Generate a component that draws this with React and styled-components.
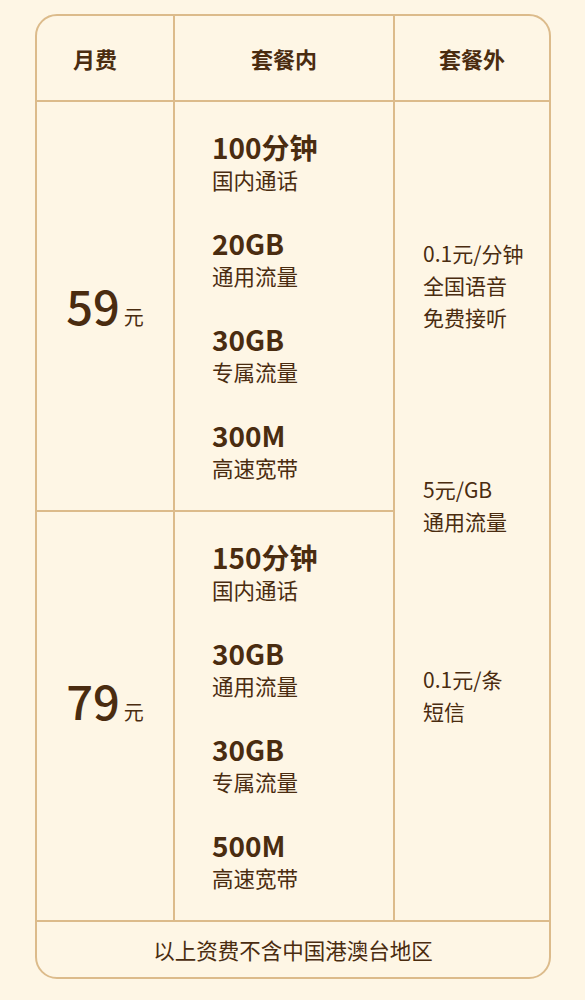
import React from "react";
import styled, { createGlobalStyle } from "styled-components";

const GlobalStyle = createGlobalStyle`
  html, body {
    margin: 0;
    padding: 0;
    background: #fef6e5;
  }
  body {
    font-family: "Noto Sans CJK SC", "Noto Sans", sans-serif;
    color: #4a2c10;
  }
`;

const plans = [
  {
    price: "59",
    shift: 0,
    items: [
      { title: "100分钟", sub: "国内通话" },
      { title: "20GB", sub: "通用流量" },
      { title: "30GB", sub: "专属流量" },
      { title: "300M", sub: "高速宽带" },
    ],
  },
  {
    price: "79",
    shift: 30,
    items: [
      { title: "150分钟", sub: "国内通话" },
      { title: "30GB", sub: "通用流量" },
      { title: "30GB", sub: "专属流量" },
      { title: "500M", sub: "高速宽带" },
    ],
  },
];

const extras = [
  { lines: ["0.1元/分钟", "全国语音", "免费接听"], top: 135 },
  { lines: ["5元/GB", "通用流量"], top: 140 },
  { lines: ["0.1元/条", "短信"], top: 126 },
];

const LINE = "#dcbb8b";

const Table = styled.div`
  margin: 14px 34px 0 35px;
  border: 2px solid ${LINE};
  border-radius: 22px;
  overflow: hidden;
  display: grid;
  grid-template-columns: 138px 220px 1fr;
  grid-template-rows: 86px 410px 408px 57px;
`;

const HeadCell = styled.div`
  display: flex;
  align-items: center;
  justify-content: center;
  font-size: 22px;
  font-weight: 700;
  padding-right: ${(p) => p.$pad || 0}px;
  border-bottom: 2px solid ${LINE};
  border-right: ${(p) => (p.$last ? "none" : `2px solid ${LINE}`)};
`;

const PriceCell = styled.div`
  display: flex;
  align-items: center;
  justify-content: center;
  border-right: 2px solid ${LINE};
  border-bottom: ${(p) => (p.$last ? "none" : `2px solid ${LINE}`)};
  padding-bottom: ${(p) => p.$shift}px;
`;

const PriceInner = styled.div`
  display: flex;
  align-items: baseline;
`;

const Price = styled.span`
  font-size: 47px;
  font-weight: 500;
  line-height: 1;
`;

const Unit = styled.span`
  font-size: 20px;
  margin-left: 4px;
`;

const ItemsCell = styled.div`
  display: flex;
  flex-direction: column;
  justify-content: center;
  gap: 30px;
  padding-left: 37px;
  border-right: 2px solid ${LINE};
  border-bottom: ${(p) => (p.$last ? "none" : `2px solid ${LINE}`)};
`;

const Item = styled.div`
  display: flex;
  flex-direction: column;
`;

const ItemTitle = styled.div`
  font-size: 28px;
  font-weight: 700;
  line-height: 36px;
`;

const ItemSub = styled.div`
  font-size: 21.5px;
  line-height: 30px;
`;

const ExtraCell = styled.div`
  grid-column: 3;
  grid-row: 2 / span 2;
  padding-left: 28px;
  display: flex;
  flex-direction: column;
`;

const ExtraGroup = styled.div`
  margin-top: ${(p) => p.$top}px;
  font-size: 21px;
  line-height: 32px;
`;

const Footer = styled.div`
  grid-column: 1 / span 3;
  border-top: 2px solid ${LINE};
  display: flex;
  align-items: center;
  justify-content: center;
  font-size: 21.5px;
`;

export default function App() {
  return (
    <>
      <GlobalStyle />
      <Table>
        <HeadCell $pad={20}>月费</HeadCell>
        <HeadCell>套餐内</HeadCell>
        <HeadCell $last>套餐外</HeadCell>
        {plans.map((plan, i) => (
          <React.Fragment key={plan.price}>
            <PriceCell
              $last={i === plans.length - 1}
              $shift={plan.shift}
              style={{ gridRow: i + 2 }}
            >
              <PriceInner>
                <Price>{plan.price}</Price>
                <Unit>元</Unit>
              </PriceInner>
            </PriceCell>
            <ItemsCell $last={i === plans.length - 1} style={{ gridRow: i + 2 }}>
              {plan.items.map((it, j) => (
                <Item key={j}>
                  <ItemTitle>{it.title}</ItemTitle>
                  <ItemSub>{it.sub}</ItemSub>
                </Item>
              ))}
            </ItemsCell>
          </React.Fragment>
        ))}
        <ExtraCell>
          {extras.map((g, i) => (
            <ExtraGroup key={i} $top={g.top}>
              {g.lines.map((l) => (
                <div key={l}>{l}</div>
              ))}
            </ExtraGroup>
          ))}
        </ExtraCell>
        <Footer>以上资费不含中国港澳台地区</Footer>
      </Table>
    </>
  );
}
